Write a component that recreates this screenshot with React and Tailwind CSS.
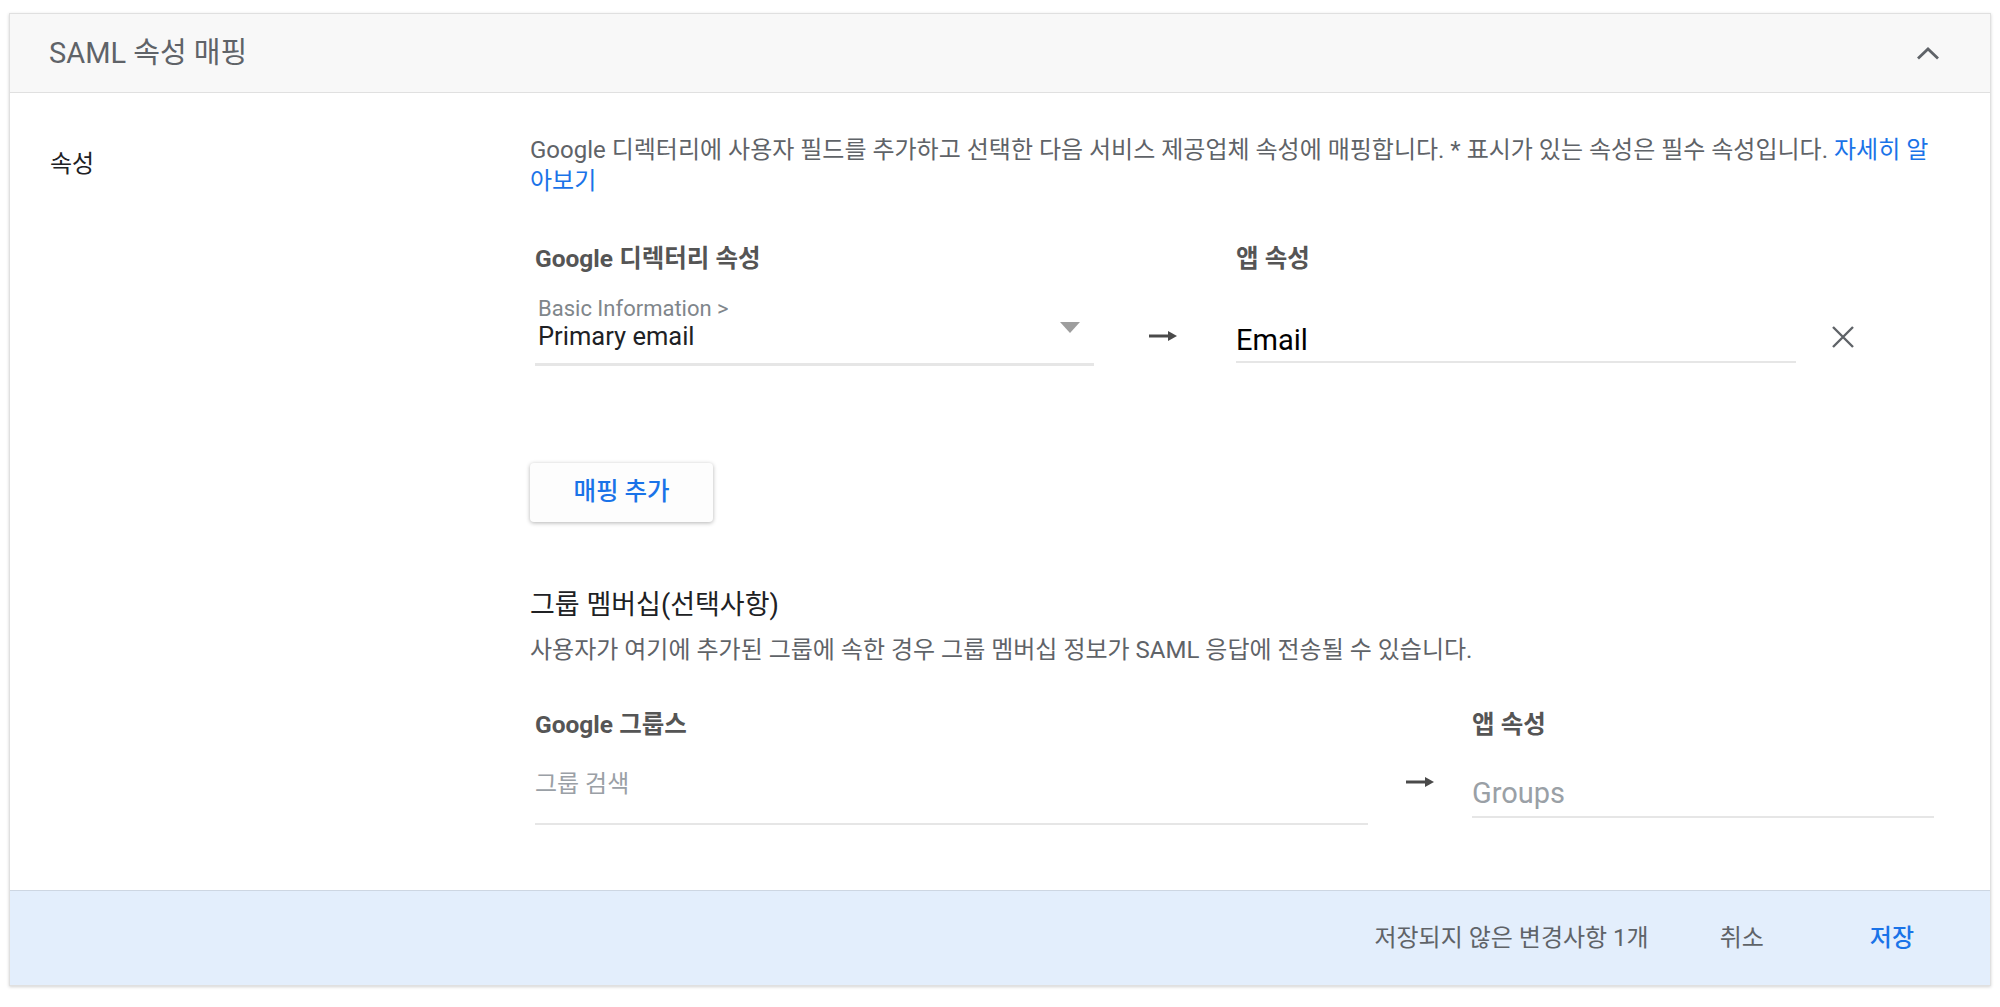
import React from "react";

const ArrowRight = () => (
  <svg width="28" height="12" viewBox="0 0 28 12" className="block text-[#4a4a4a]">
    <line x1="0" y1="6" x2="21" y2="6" stroke="currentColor" strokeWidth="3" />
    <polygon points="19,1 28,6 19,11" fill="currentColor" />
  </svg>
);

const CloseIcon = () => (
  <svg width="24" height="24" viewBox="0 0 24 24" className="block text-[#5f6368]">
    <path d="M2 2 L22 22 M22 2 L2 22" stroke="currentColor" strokeWidth="2.4" fill="none" />
  </svg>
);

const ChevronUp = () => (
  <svg width="24" height="14" viewBox="0 0 24 14" className="block text-[#5f6368]">
    <polyline points="2,12.5 12,3 22,12.5" stroke="currentColor" strokeWidth="2.8" fill="none" />
  </svg>
);

const Caret = () => (
  <svg width="20" height="11" viewBox="0 0 20 11" className="block text-[#9e9e9e]">
    <polygon points="0,0 20,0 10,11" fill="currentColor" />
  </svg>
);

export default function App() {
  return (
    <div className="min-h-[1007px] bg-white px-[9px] pt-[13px] font-['Roboto','Noto_Sans_CJK_KR',sans-serif]">
      <div className="border border-[#e0e0e0] shadow-[0_1px_3px_rgba(0,0,0,0.18)] bg-white">
        {/* Header */}
        <div className="h-[79px] bg-[#f8f8f8] border-b border-[#e0e0e0] flex items-center justify-between pl-[39px] pr-[50px]">
          <h1 className="text-[29px] text-[#5f6368] leading-none">SAML 속성 매핑</h1>
          <ChevronUp />
        </div>

        {/* Body */}
        <div className="flex pt-[42px] pb-[65px]">
          <div className="w-[520px] shrink-0 pl-[40px] pt-[14px]">
            <span className="text-[24px] leading-[31px] text-[#202124]">속성</span>
          </div>

          <div className="flex-1 pr-[20px]">
            <p className="text-[24px] leading-[31px] text-[#5f6368]">
              <span className="whitespace-nowrap">
                Google 디렉터리에 사용자 필드를 추가하고 선택한 다음 서비스 제공업체 속성에 매핑합니다. * 표시가 있는 속성은 필수 속성입니다.{" "}
                <a href="#" className="text-[#1a73e8]">자세히 알</a>
              </span>
              <br />
              <a href="#" className="text-[#1a73e8]">아보기</a>
            </p>

            {/* Attribute mapping row */}
            <div className="pl-[5px] mt-[47px] flex items-start">
              <div className="w-[559px]">
                <div className="text-[24.5px] leading-[30px] font-bold text-[#555]">Google 디렉터리 속성</div>
                <div className="mt-[23px] border-b-[3px] border-[#e6e6e6] pb-[12px] flex items-end justify-between pr-[14px]">
                  <div className="pl-[3px]">
                    <div className="text-[22px] leading-[24px] text-[#80868b]">Basic Information &gt;</div>
                    <div className="text-[25.5px] leading-[30px] text-[#202124]">Primary email</div>
                  </div>
                  <div className="mb-[18px]">
                    <Caret />
                  </div>
                </div>
              </div>

              <div className="w-[142px] flex justify-center pr-[4px] mt-[86px]">
                <ArrowRight />
              </div>

              <div className="w-[560px]">
                <div className="text-[24.5px] leading-[30px] font-bold text-[#555]">앱 속성</div>
                <div className="mt-[49px] border-b-2 border-[#e6e6e6] pb-[4px]">
                  <div className="text-[29px] leading-[34px] text-black">Email</div>
                </div>
              </div>

              <div className="ml-[35px] mt-[81px]">
                <CloseIcon />
              </div>
            </div>

            {/* Add mapping button */}
            <button className="mt-[97px] w-[183px] h-[59px] bg-[#fdfdfd] rounded-[4px] shadow-[0_1px_4px_rgba(0,0,0,0.3)] text-[24.5px] font-medium text-[#1a73e8]">
              매핑 추가
            </button>

            {/* Group membership */}
            <h2 className="mt-[66px] text-[27px] leading-[34px] text-[#202124]">그룹 멤버십(선택사항)</h2>
            <p className="mt-[13px] text-[24px] leading-[31px] text-[#5f6368]">
              사용자가 여기에 추가된 그룹에 속한 경우 그룹 멤버십 정보가 SAML 응답에 전송될 수 있습니다.
            </p>

            <div className="pl-[5px] mt-[44px] flex items-start">
              <div className="w-[833px]">
                <div className="text-[24.5px] leading-[30px] font-bold text-[#555]">Google 그룹스</div>
                <div className="mt-[29px] border-b-2 border-[#e6e6e6] pb-[24px]">
                  <div className="text-[24px] leading-[30px] text-[#9aa0a6]">그룹 검색</div>
                </div>
              </div>

              <div className="w-[104px] flex justify-center mt-[66px]">
                <ArrowRight />
              </div>

              <div className="w-[462px]">
                <div className="text-[24.5px] leading-[30px] font-bold text-[#555]">앱 속성</div>
                <div className="mt-[36px] border-b-2 border-[#e6e6e6] pb-[6px]">
                  <div className="text-[29px] leading-[34px] text-[#9aa0a6]">Groups</div>
                </div>
              </div>
            </div>
          </div>
        </div>

        {/* Footer */}
        <div className="h-[95px] bg-[#e3eefc] border-t border-[#cdd6e2] flex items-center justify-end pr-[76px] text-[24px]">
          <span className="text-[#5f6368]">저장되지 않은 변경사항 1개</span>
          <button className="ml-[71px] text-[#5f6368]">취소</button>
          <button className="ml-[106px] text-[#1a73e8] font-medium">저장</button>
        </div>
      </div>
    </div>
  );
}
